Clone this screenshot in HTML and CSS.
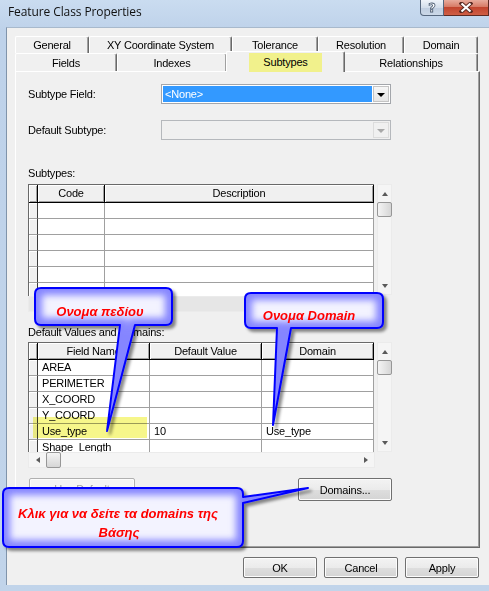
FILE: index.html
```html
<!DOCTYPE html>
<html>
<head>
<meta charset="utf-8">
<title>Feature Class Properties</title>
<link rel="stylesheet" href="styles.css">
</head>
<body>
<div class="window">
  <div class="titlebar">
    <div class="title">Feature Class Properties</div>
    <div class="caption-btns">
      <div class="cap-help"><span class="qmark">?</span></div>
      <div class="cap-close">
        <svg width="14" height="11" viewBox="0 0 14 11"><path d="M2.5 1.5 L11.5 9.5 M11.5 1.5 L2.5 9.5" stroke="#5a2a22" stroke-width="4" stroke-linecap="square"/><path d="M2.5 1.5 L11.5 9.5 M11.5 1.5 L2.5 9.5" stroke="#fff" stroke-width="2.2"/></svg>
      </div>
    </div>
  </div>

  <div class="client">
    <div class="tabs">
      <div class="tabrow row1">
        <div class="tab">General</div>
        <div class="tab">XY Coordinate System</div>
        <div class="tab">Tolerance</div>
        <div class="tab">Resolution</div>
        <div class="tab">Domain</div>
      </div>
      <div class="tabrow row2">
        <div class="tab">Fields</div>
        <div class="tab">Indexes</div>
        <div class="tab active"><span class="hl">Subtypes</span></div>
        <div class="tab">Relationships</div>
      </div>
    </div>

    <div class="panel">
      <div class="field-row">
        <span class="lbl">Subtype Field:</span>
        <div class="combo">
          <span class="val">&lt;None&gt;</span>
          <span class="drop"></span>
        </div>
      </div>
      <div class="field-row second">
        <span class="lbl">Default Subtype:</span>
        <div class="combo disabled">
          <span class="val"></span>
          <span class="drop"></span>
        </div>
      </div>

      <div class="section-lbl s1">Subtypes:</div>
      <div class="grid-wrap w1">
        <div class="grid-col">
          <div class="grid g1">
            <div class="hd"></div><div class="hd">Code</div><div class="hd">Description</div>
            <div class="rs"></div><div class="c"></div><div class="c"></div>
            <div class="rs"></div><div class="c"></div><div class="c"></div>
            <div class="rs"></div><div class="c"></div><div class="c"></div>
            <div class="rs"></div><div class="c"></div><div class="c"></div>
            <div class="rs"></div><div class="c"></div><div class="c"></div>
            <div class="rs"></div><div class="c"></div><div class="c"></div>
          </div>
          <div class="hscroll blank"></div>
        </div>
        <div class="vscroll v1"><span class="arr up"></span><span class="thumb"></span><span class="fill"></span><span class="arr down"></span></div>
      </div>

      <div class="section-lbl s2">Default Values and Domains:</div>
      <div class="grid-wrap w2">
        <div class="grid-col">
          <div class="grid g2">
            <div class="hd"></div><div class="hd">Field Name</div><div class="hd">Default Value</div><div class="hd">Domain</div>
            <div class="rs"></div><div class="c">AREA</div><div class="c"></div><div class="c"></div>
            <div class="rs"></div><div class="c">PERIMETER</div><div class="c"></div><div class="c"></div>
            <div class="rs"></div><div class="c">X_COORD</div><div class="c"></div><div class="c"></div>
            <div class="rs"></div><div class="c">Y_COORD</div><div class="c"></div><div class="c"></div>
            <div class="rs"></div><div class="c">Use_type</div><div class="c">10</div><div class="c">Use_type</div>
            <div class="rs"></div><div class="c">Shape_Length</div><div class="c"></div><div class="c"></div>
          </div>
          <div class="hscroll"><span class="harr left"></span><span class="hthumb"></span><span class="fill"></span><span class="harr right"></span></div>
        </div>
        <div class="vscroll v2"><span class="arr up"></span><span class="thumb"></span><span class="fill"></span><span class="arr down"></span></div>
      </div>

      <div class="panel-btns">
        <div class="btn disabled use-default">Use Default</div>
        <div class="btn domains">Domains...</div>
      </div>
    </div>

    <div class="dlg-btns">
      <div class="btn dlg">OK</div>
      <div class="btn dlg">Cancel</div>
      <div class="btn dlg">Apply</div>
    </div>
  </div>

  <div class="marker"></div>

  <svg class="callouts" width="489" height="591" viewBox="0 0 489 591">
    <defs>
      <path id="p1" d="M41,288 H166 Q172,288 172,294 V319 Q172,325 166,325 H135 L107,431 L120,325 H41 Q35,325 35,319 V294 Q35,288 41,288 Z"/>
      <path id="p2" d="M251,293 H377 Q383,293 383,299 V322 Q383,328 377,328 H291 L273,425 L277,328 H251 Q245,328 245,322 V299 Q245,293 251,293 Z"/>
      <path id="p3" d="M9,488 H237 Q243,488 243,494 V497 L308,488 L243,503 V541 Q243,547 237,547 H9 Q3,547 3,541 V494 Q3,488 9,488 Z"/>
      <clipPath id="c1"><use href="#p1"/></clipPath>
      <clipPath id="c2"><use href="#p2"/></clipPath>
      <clipPath id="c3"><use href="#p3"/></clipPath>
      <filter id="shadow" x="-20%" y="-20%" width="140%" height="140%">
        <feDropShadow dx="3" dy="3" stdDeviation="1.6" flood-color="#000" flood-opacity="0.45"/>
      </filter>
      <filter id="blur" x="-20%" y="-20%" width="140%" height="140%">
        <feGaussianBlur stdDeviation="3.5"/>
      </filter>
    </defs>

    <g filter="url(#shadow)">
      <use href="#p1" fill="#f3f3ff"/>
      <g clip-path="url(#c1)"><use href="#p1" fill="none" stroke="#8585ff" stroke-width="14" filter="url(#blur)"/></g>
      <use href="#p1" fill="none" stroke="#0000ff" stroke-width="2" stroke-linejoin="round"/>
    </g>
    <g filter="url(#shadow)">
      <use href="#p2" fill="#f3f3ff"/>
      <g clip-path="url(#c2)"><use href="#p2" fill="none" stroke="#8585ff" stroke-width="14" filter="url(#blur)"/></g>
      <use href="#p2" fill="none" stroke="#0000ff" stroke-width="2" stroke-linejoin="round"/>
    </g>
    <g filter="url(#shadow)">
      <use href="#p3" fill="#f3f3ff"/>
      <g clip-path="url(#c3)"><use href="#p3" fill="none" stroke="#8585ff" stroke-width="14" filter="url(#blur)"/></g>
      <use href="#p3" fill="none" stroke="#0000ff" stroke-width="2" stroke-linejoin="round"/>
    </g>

    <text class="ctext" x="100" y="316">Ονομα πεδίου</text>
    <text class="ctext" x="309" y="320">Ονομα Domain</text>
    <text class="ctext" x="118" y="518">Κλικ για να δείτε τα domains της</text>
    <text class="ctext" x="119" y="537">Βάσης</text>
  </svg>
</div>
</body>
</html>
```

FILE: styles.css
```css
* { box-sizing: border-box; }
html, body { margin: 0; padding: 0; }
body {
  background: #c2d5ea;
  font-family: "Liberation Sans", Arial, sans-serif;
  font-size: 11px;
  letter-spacing: -0.2px;
  color: #000;
}
.window {
  position: relative;
  width: 489px;
  height: 591px;
  overflow: hidden;
  background: linear-gradient(180deg, #cadcf0 0, #bed2ea 30px, #c1d4ea 100%);
}

/* title bar */
.titlebar {
  height: 27px;
  display: flex;
  justify-content: space-between;
  align-items: flex-start;
}
.title {
  font-family: "Open Sans", "Noto Sans", sans-serif;
  font-size: 12px;
  letter-spacing: -0.1px;
  line-height: 16px;
  padding: 4px 0 0 8px;
  color: #111;
}
.caption-btns { display: flex; height: 16px; }
.cap-help {
  width: 24px;
  height: 16px;
  border: 1px solid #56677e;
  border-top: 0;
  border-radius: 0 0 0 4px;
  background: linear-gradient(#eef3f9, #d3deeb 50%, #bfcde0 51%, #cbd8e8);
  display: flex;
  align-items: center;
  justify-content: center;
}
.qmark {
  font-family: "DejaVu Sans", sans-serif;
  font-weight: bold;
  font-size: 13px;
  line-height: 14px;
  letter-spacing: 0;
  color: #fff;
  -webkit-text-stroke: 0.8px #4a5a70;
}
.cap-close {
  width: 45px;
  height: 16px;
  border: 1px solid #5e2a22;
  border-left: 0;
  border-top: 0;
  background: linear-gradient(#e8ab9c, #d77b66 45%, #c2452e 50%, #cf5e45);
  display: flex;
  align-items: center;
  justify-content: center;
}

/* client area */
.client {
  margin-left: 6px;
  height: 558px;
  border-left: 1px solid #8094ab;
  border-top: 1px solid #a8b9cc;
  background: #f0f0f0;
}

/* tabs */
.tabs { margin: 8px 0 0 8px; width: 463px; }
.tabrow { display: grid; }
.row1 { grid-template-columns: 74px 143px 86px 86px 74px; height: 17px; }
.row2 { grid-template-columns: 102px 110px 117px 134px; height: 18px; }
.tab {
  display: flex;
  align-items: center;
  justify-content: center;
  background: #f0f0f0;
  border-top: 1px solid #fff;
  border-left: 1px solid #fff;
  border-right: 1px solid #696969;
  box-shadow: inset -1px 0 #a0a0a0;
  border-radius: 2px 2px 0 0;
  white-space: nowrap;
}
.row2 .tab { padding-top: 1px; }
.tab.active {
  position: relative;
  z-index: 2;
  margin: -2px -1px -1px -1px;
  padding-top: 0;
}
.hl {
  background: #f1f18c;
  height: 19px;
  padding: 2px 14px 0 14px;
  line-height: 15px;
  margin-top: 1px;
}

/* panel */
.panel {
  position: relative;
  margin-left: 8px;
  width: 465px;
  height: 477px;
  border-top: 1px solid #fff;
  border-left: 1px solid #fff;
  border-right: 1px solid #696969;
  border-bottom: 1px solid #696969;
  box-shadow: inset -1px -1px #a0a0a0;
  padding: 12px 0 0 12px;
}
.field-row { display: flex; align-items: center; height: 20px; }
.field-row.second { margin-top: 16px; }
.lbl { width: 133px; }
.combo {
  width: 230px;
  height: 20px;
  border: 1px solid #a3a6ab;
  background: #fff;
  display: flex;
  padding: 1px;
  gap: 1px;
}
.combo .val {
  flex: 1;
  background: #3399ff;
  color: #fff;
  padding-left: 2px;
  line-height: 16px;
}
.combo .drop {
  width: 16px;
  background: linear-gradient(#f6f6f6, #e6e6e6);
  border: 1px solid #c4c4c4;
  display: flex;
  align-items: center;
  justify-content: center;
}
.combo .drop::before {
  content: "";
  border-left: 4px solid transparent;
  border-right: 4px solid transparent;
  border-top: 4px solid #000;
  margin-top: 1px;
}
.combo.disabled { background: #f0f0f0; border-color: #b5b8bc; }
.combo.disabled .val { background: #f0f0f0; }
.combo.disabled .drop { background: #f0f0f0; border-color: #dcdcdc; }
.combo.disabled .drop::before { border-top-color: #a8a8a8; }

.section-lbl { line-height: 14px; height: 14px; }
.s1 { margin-top: 26px; }
.w1 { margin-top: 4px; }
.s2 { margin-top: 13px; }
.w2 { margin-top: 3px; }

/* grids */
.grid-wrap { display: flex; gap: 2px; }
.grid-col { width: 347px; }
.grid {
  display: grid;
  width: 346px;
  border-left: 1px solid #696969;
  border-top: 1px solid #696969;
  overflow: hidden;
  background: #f0f0f0;
}
.g1 { grid-template-columns: 9px 67px 269px; grid-template-rows: 18px; grid-auto-rows: 16px; height: 112px; }
.g2 { grid-template-columns: 9px 112px 112px 112px; grid-template-rows: 17px; grid-auto-rows: 16px; height: 110px; }
.hd {
  background: #f0f0f0;
  border-right: 1px solid #000;
  border-bottom: 1px solid #000;
  box-shadow: inset 1px 1px #fff, inset -1px -1px #a0a0a0;
  text-align: center;
  line-height: 16px;
  white-space: nowrap;
  overflow: hidden;
}
.rs {
  background: #f0f0f0;
  border-right: 1px solid #3c3c3c;
  border-bottom: 1px solid #a0a0a0;
  box-shadow: inset 1px 1px #fff;
}
.c {
  background: #fff;
  border-right: 1px solid #a0a0a0;
  border-bottom: 1px solid #a0a0a0;
  padding-left: 4px;
  line-height: 15px;
  white-space: nowrap;
  overflow: hidden;
}

/* scrollbars */
.vscroll {
  width: 15px;
  display: flex;
  flex-direction: column;
  background: #f5f5f5;
  border: 1px solid #ebebeb;
}
.v1 { height: 111px; }
.v2 { height: 110px; }
.arr { height: 17px; display: flex; align-items: center; justify-content: center; flex: none; }
.arr.up::before {
  content: "";
  border-left: 3px solid transparent;
  border-right: 3px solid transparent;
  border-bottom: 4px solid #5a5a5a;
}
.arr.down::before {
  content: "";
  border-left: 3px solid transparent;
  border-right: 3px solid transparent;
  border-top: 4px solid #5a5a5a;
}
.thumb {
  height: 15px;
  flex: none;
  margin: 0 -1px;
  border: 1px solid #979797;
  border-radius: 2px;
  background: linear-gradient(90deg, #f4f4f4, #e2e2e2 60%, #d6d6d6);
}
.fill { flex: 1; }
.hscroll {
  height: 16px;
  display: flex;
  background: #f5f5f5;
  border: 1px solid #ebebeb;
}
.hscroll.blank { background: #e6e6e6; }
.harr { width: 17px; flex: none; display: flex; align-items: center; justify-content: center; }
.harr.left::before {
  content: "";
  border-top: 3px solid transparent;
  border-bottom: 3px solid transparent;
  border-right: 4px solid #5a5a5a;
}
.harr.right::before {
  content: "";
  border-top: 3px solid transparent;
  border-bottom: 3px solid transparent;
  border-left: 4px solid #5a5a5a;
}
.hthumb {
  width: 15px;
  flex: none;
  margin: -1px 0;
  border: 1px solid #979797;
  border-radius: 2px;
  background: linear-gradient(#f4f4f4, #e2e2e2 60%, #d6d6d6);
}

/* buttons */
.panel-btns {
  margin-top: 10px;
  display: flex;
  align-items: flex-start;
  padding-left: 1px;
}
.btn {
  display: flex;
  align-items: center;
  justify-content: center;
  border: 1px solid #707070;
  border-radius: 2px;
  background: linear-gradient(#f3f3f3, #ebebeb 50%, #dedede 51%, #d4d4d4);
  box-shadow: inset 0 0 0 1px #fcfcfc;
}
.use-default { width: 106px; height: 22px; }
.btn.disabled { border-color: #b0b0b0; color: #a0a0a0; background: #f4f4f4; }
.domains { width: 94px; height: 23px; margin-left: 163px; }
.dlg-btns {
  margin-top: 9px;
  display: flex;
  justify-content: flex-end;
  gap: 7px;
  padding-right: 10px;
}
.dlg { width: 74px; height: 21px; }

/* overlays (annotations drawn over the dialog) */
.marker {
  position: absolute;
  left: 33px;
  top: 417px;
  width: 114px;
  height: 21px;
  background: #f6f68a;
  mix-blend-mode: multiply;
}
.callouts {
  position: absolute;
  left: 0;
  top: 0;
  pointer-events: none;
}
.ctext {
  font-family: "Liberation Sans", Arial, sans-serif;
  font-weight: bold;
  font-style: italic;
  font-size: 13px;
  letter-spacing: 0;
  fill: #ff0000;
  text-anchor: middle;
}
```
